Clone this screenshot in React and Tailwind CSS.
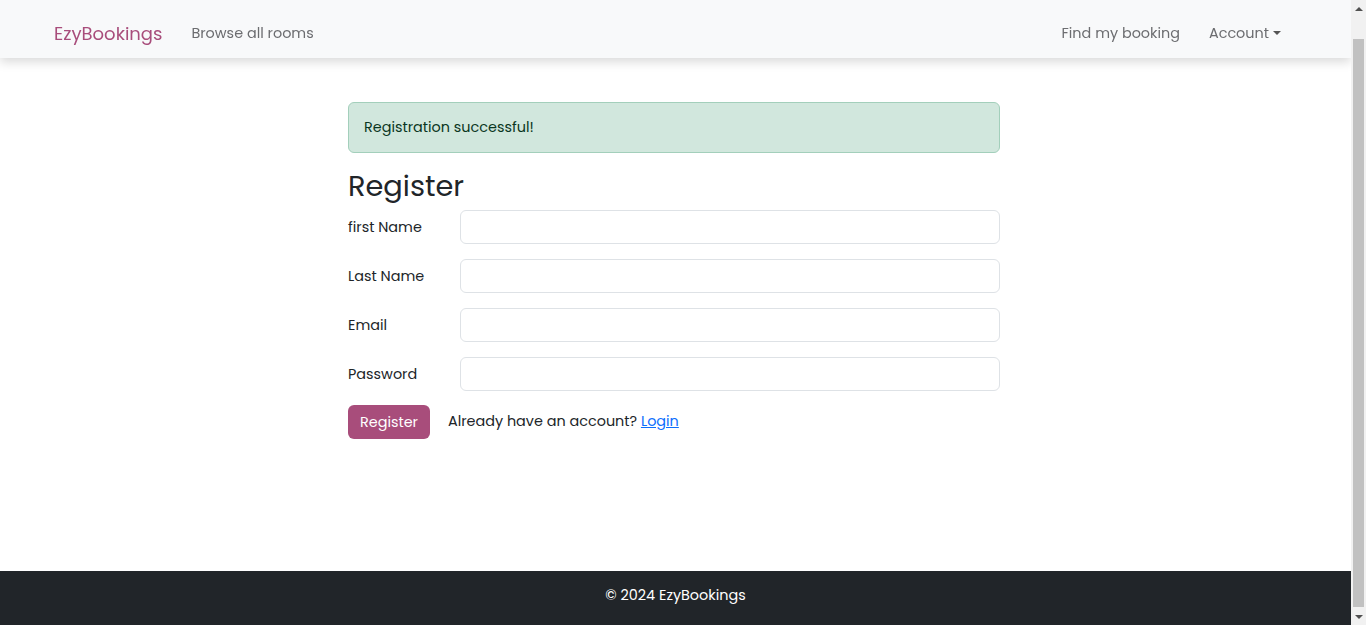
import { useLayoutEffect, useRef, useState } from "react";

const font = { fontFamily: "Poppins, 'Open Sans', sans-serif" };

function Field({ label, type = "text" }) {
    const [value, setValue] = useState("");
    return (
        <div className="flex items-center mb-[15px]">
            <label className="w-[112px] shrink-0 pt-[2px] text-[14.4px] text-[#212529]">{label}</label>
            <input
                type={type}
                value={value}
                onChange={e => setValue(e.target.value)}
                className="flex-grow h-[34px] border border-[#dee2e6] rounded-[6px] px-3 bg-white outline-none"
            />
        </div>
    );
}

function Scrollbar() {
    return (
        <div className="w-[15px] shrink-0 flex flex-col bg-[#f1f1f1]">
            <div className="h-[17px] flex items-center justify-center">
                <span className="w-0 h-0 border-l-[4px] border-r-[4px] border-b-[4px] border-l-transparent border-r-transparent border-b-[#505050]"></span>
            </div>
            <div className="flex-grow pt-[22px] px-[2px]">
                <div className="h-[568px] bg-[#c1c1c1]"></div>
            </div>
            <div className="h-[17px] flex items-center justify-center">
                <span className="w-0 h-0 border-l-[4px] border-r-[4px] border-t-[4px] border-l-transparent border-r-transparent border-t-[#505050]"></span>
            </div>
        </div>
    );
}

export default function App() {
    const pageRef = useRef(null);

    // page is shown scrolled to the bottom
    useLayoutEffect(() => {
        const div = pageRef.current;
        if (div) div.scrollTop = div.scrollHeight;
    }, []);

    return (
        <div className="flex h-[625px] bg-white" style={font}>
            <div ref={pageRef} className="flex-grow overflow-hidden">
                <div className="flex flex-col">
                    <nav className="sticky top-0 h-[58px] pt-[9px] bg-[#f8f9fa] shadow-[0_4px_10px_rgba(0,0,0,0.15)] flex items-center pl-[54px] pr-[70px] z-10">
                        <a href="#" className="text-[18px] text-[#a84d7b] mr-[29px]">EzyBookings</a>
                        <a href="#" className="text-[14.4px] text-[#6c6d70]">Browse all rooms</a>
                        <div className="ml-auto flex items-center gap-[29px] text-[14.4px] text-[#6c6d70]">
                            <a href="#">Find my booking</a>
                            <a href="#" className="flex items-center">
                                Account
                                <span className="ml-[4px] w-0 h-0 border-l-[4px] border-r-[4px] border-t-[4px] border-l-transparent border-r-transparent border-t-[#555]"></span>
                            </a>
                        </div>
                    </nav>

                    <main className="h-[537px] pr-[3px]">
                        <div className="w-[652px] mx-auto pt-[68px]">
                            <div className="h-[51px] flex items-center px-[15px] bg-[#d1e7dd] border border-[#a3cfbb] rounded-[6px] text-[14.4px] text-[#0a3622]">
                                Registration successful!
                            </div>
                            <h2 className="text-[28.8px] leading-none text-[#212529] mt-[19px] mb-[9px]">Register</h2>
                            <form onSubmit={e => e.preventDefault()}>
                                <Field label="first Name" />
                                <Field label="Last Name" />
                                <Field label="Email" type="email" />
                                <Field label="Password" type="password" />
                                <div className="flex items-center -mt-[1px]">
                                    <button className="h-[34px] px-[12px] pt-[2px] bg-[#a84d7b] text-white text-[14.4px] rounded-[6px]">Register</button>
                                    <span className="ml-[18px] text-[14.4px] text-[#212529]">
                                        Already have an account? <a href="#" className="text-[#0d6efd] underline">Login</a>
                                    </span>
                                </div>
                            </form>
                        </div>
                    </main>

                    <footer className="h-[54px] pt-[14px] bg-[#212529] text-white text-[14.4px] flex justify-center items-start">
                        © 2024 EzyBookings
                    </footer>
                </div>
            </div>
            <Scrollbar />
        </div>
    );
}
